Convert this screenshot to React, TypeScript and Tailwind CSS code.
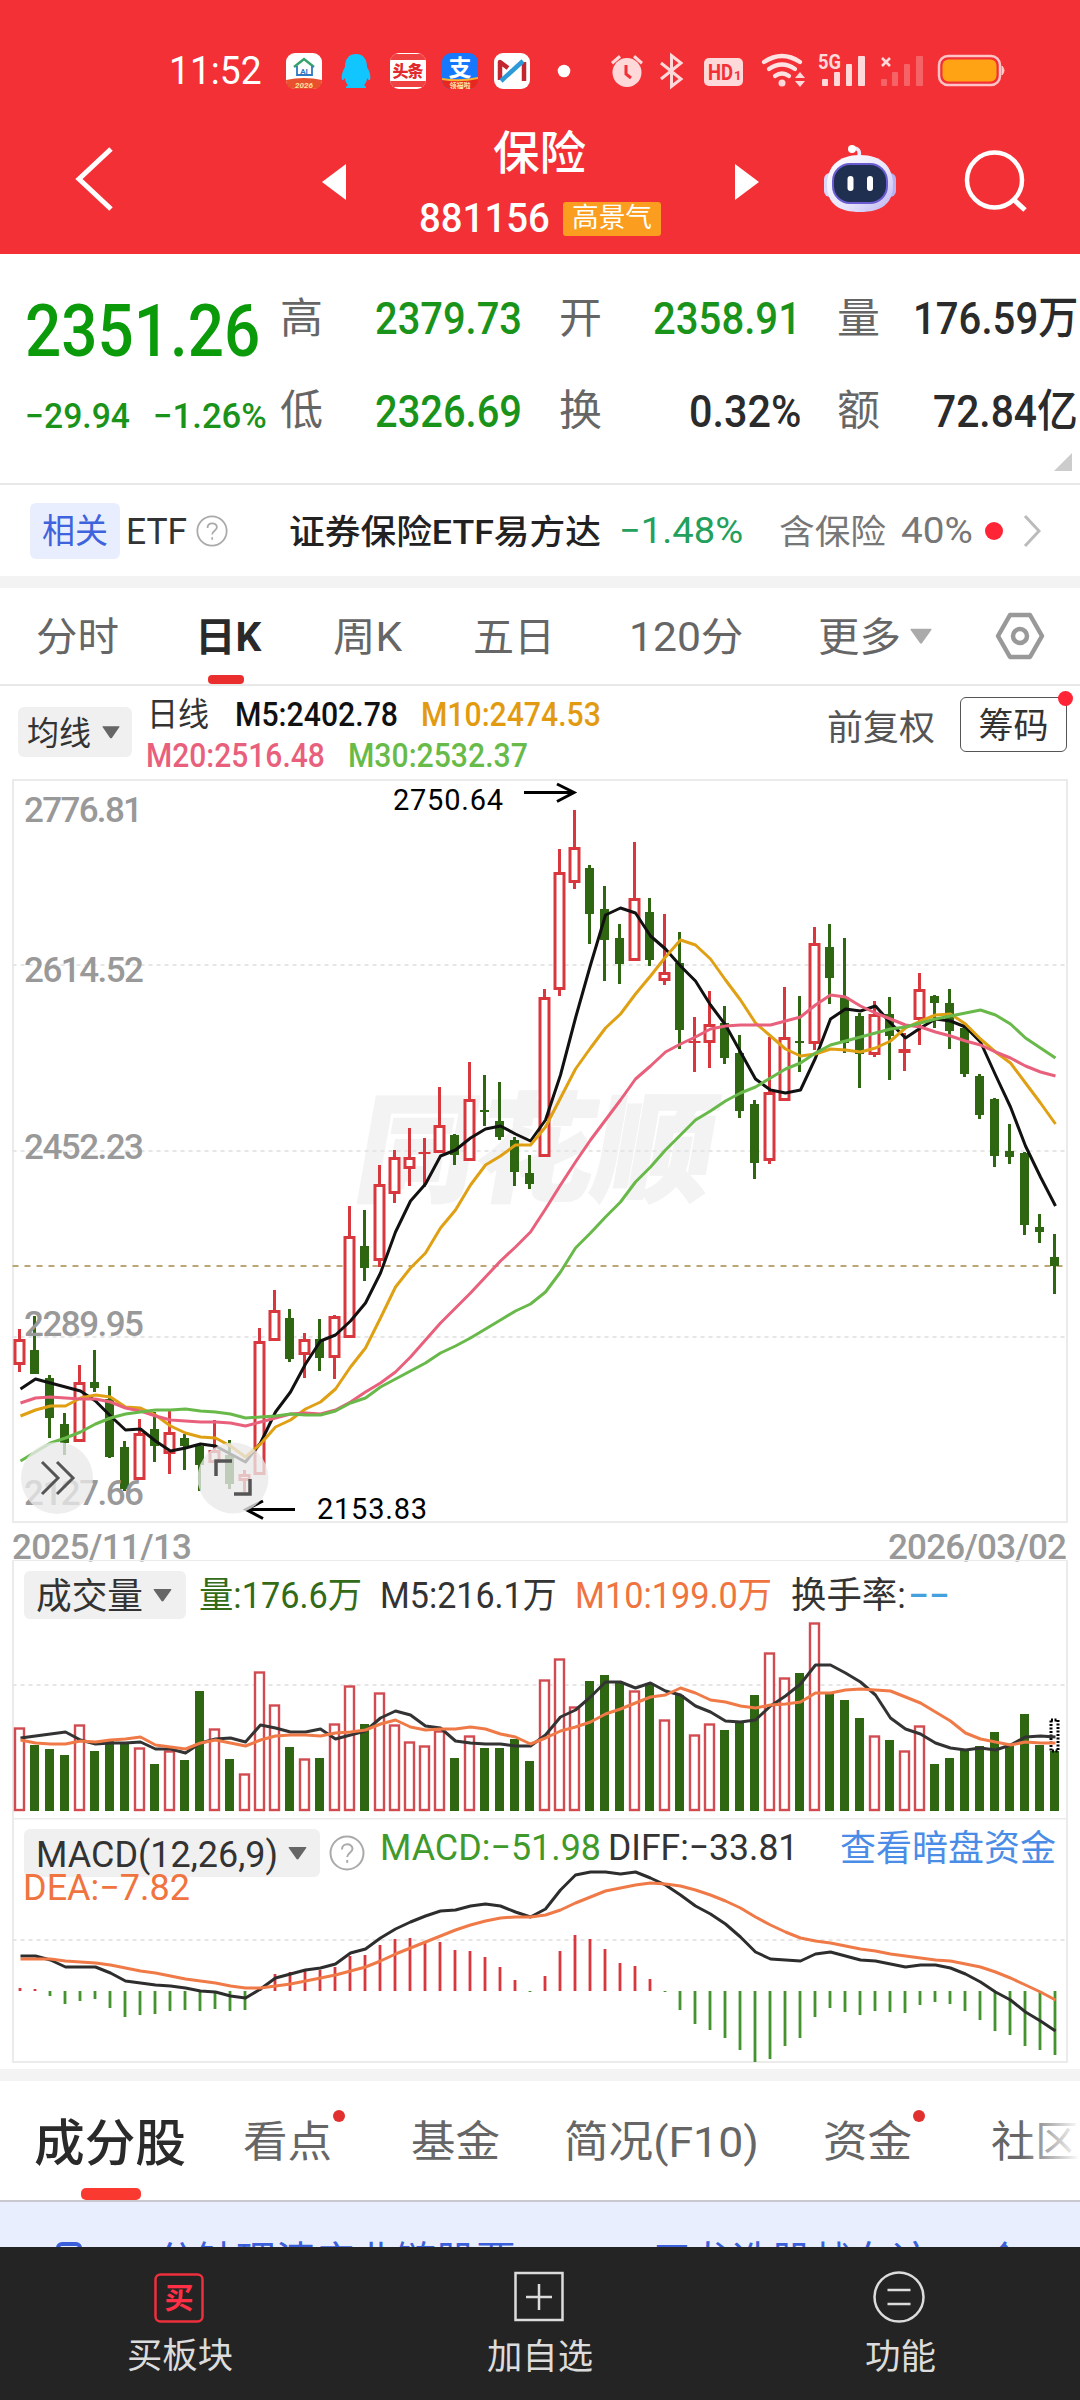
import { useLayoutEffect, useRef, useState, type ReactNode } from 'react';
import { clsx } from 'clsx';

const RED = '#d8383d';
const GREEN = '#2f6612';

// up/down flag, high, body top, body bottom, low, volume top
type Candle = [0 | 1, number, number, number, number, number];

const candles: Candle[] = [
  [1, 1329, 1339, 1365, 1372, 1729], [0, 1316, 1350, 1374, 1374, 1745], [0, 1375, 1378, 1418, 1438, 1749], [0, 1413, 1424, 1443, 1455, 1755],
  [1, 1365, 1382, 1442, 1442, 1726], [0, 1350, 1382, 1388, 1392, 1751], [0, 1386, 1399, 1457, 1458, 1741], [0, 1441, 1447, 1489, 1491, 1743],
  [1, 1419, 1433, 1480, 1480, 1749], [0, 1412, 1429, 1446, 1462, 1764], [1, 1411, 1432, 1454, 1474, 1752], [0, 1434, 1438, 1446, 1470, 1760],
  [0, 1443, 1446, 1465, 1491, 1691], [1, 1420, 1450, 1463, 1463, 1730], [0, 1440, 1455, 1484, 1489, 1759], [1, 1470, 1474, 1481, 1492, 1775],
  [1, 1328, 1341, 1475, 1475, 1673], [1, 1290, 1310, 1341, 1341, 1706], [0, 1309, 1318, 1359, 1362, 1747], [1, 1333, 1339, 1355, 1378, 1760],
  [0, 1319, 1339, 1358, 1371, 1758], [1, 1315, 1316, 1358, 1379, 1725], [1, 1206, 1236, 1338, 1338, 1687], [0, 1210, 1246, 1268, 1281, 1724],
  [1, 1165, 1184, 1261, 1267, 1694], [1, 1150, 1157, 1194, 1203, 1726], [1, 1128, 1157, 1169, 1186, 1743], [1, 1138, 1152, 1154, 1187, 1747],
  [1, 1087, 1125, 1153, 1153, 1732], [0, 1134, 1135, 1155, 1165, 1758], [1, 1062, 1099, 1161, 1161, 1737], [0, 1075, 1110, 1112, 1126, 1748],
  [0, 1082, 1121, 1137, 1140, 1748], [0, 1137, 1140, 1172, 1186, 1739], [0, 1155, 1173, 1184, 1189, 1761], [1, 989, 997, 1157, 1157, 1681],
  [1, 849, 872, 990, 996, 1660], [1, 810, 847, 883, 889, 1708], [0, 865, 868, 914, 944, 1681], [0, 886, 909, 940, 981, 1675],
  [0, 924, 938, 964, 984, 1682], [1, 842, 898, 961, 961, 1692], [0, 898, 912, 960, 966, 1684], [1, 914, 972, 981, 985, 1721],
  [0, 932, 963, 1030, 1049, 1695], [1, 1017, 1041, 1042, 1072, 1736], [1, 991, 1024, 1043, 1068, 1725], [0, 1006, 1023, 1058, 1064, 1730],
  [0, 1035, 1053, 1111, 1118, 1722], [0, 1100, 1104, 1163, 1179, 1695], [1, 1037, 1092, 1161, 1164, 1654], [1, 987, 1037, 1101, 1101, 1679],
  [0, 996, 1041, 1042, 1072, 1673], [1, 927, 943, 1044, 1050, 1624], [0, 924, 947, 978, 1004, 1693], [0, 938, 997, 1043, 1053, 1700],
  [0, 1013, 1016, 1054, 1088, 1718], [1, 1001, 1014, 1055, 1057, 1737], [0, 997, 1014, 1036, 1080, 1740], [1, 1033, 1049, 1053, 1071, 1752],
  [1, 973, 989, 1020, 1045, 1727], [0, 995, 996, 1003, 1028, 1764], [0, 989, 1003, 1031, 1049, 1758], [0, 1024, 1028, 1074, 1077, 1750],
  [0, 1074, 1076, 1115, 1119, 1746], [0, 1098, 1099, 1156, 1167, 1732], [0, 1124, 1151, 1157, 1164, 1746], [0, 1152, 1153, 1225, 1235, 1714],
  [0, 1214, 1227, 1232, 1243, 1745], [0, 1234, 1257, 1266, 1294, 1751],
];

const m5 = [1389, 1379, 1383, 1387, 1391, 1401, 1416, 1430, 1429, 1441, 1451, 1448, 1444, 1446, 1454, 1462, 1443, 1412, 1392, 1364, 1341, 1335, 1321, 1303, 1273, 1232, 1201, 1184, 1156, 1150, 1138, 1129, 1126, 1134, 1141, 1120, 1075, 1018, 965, 915, 908, 913, 936, 949, 966, 981, 1005, 1025, 1052, 1079, 1090, 1093, 1090, 1058, 1019, 1009, 1011, 1006, 1023, 1038, 1028, 1019, 1021, 1027, 1042, 1075, 1107, 1146, 1177, 1206];
const m10 = [1416, 1410, 1406, 1406, 1398, 1395, 1397, 1407, 1408, 1415, 1426, 1433, 1437, 1438, 1446, 1457, 1444, 1427, 1420, 1409, 1402, 1389, 1367, 1348, 1318, 1287, 1268, 1253, 1228, 1210, 1185, 1165, 1156, 1145, 1145, 1127, 1098, 1069, 1048, 1028, 1014, 994, 976, 957, 940, 945, 959, 980, 1000, 1023, 1036, 1049, 1056, 1054, 1049, 1050, 1052, 1048, 1041, 1028, 1021, 1015, 1014, 1024, 1039, 1052, 1063, 1083, 1103, 1124];
const m20 = [1403, 1398, 1397, 1398, 1399, 1399, 1402, 1408, 1411, 1416, 1420, 1421, 1422, 1422, 1423, 1426, 1422, 1418, 1414, 1413, 1414, 1410, 1402, 1392, 1383, 1372, 1357, 1340, 1323, 1308, 1293, 1277, 1261, 1247, 1232, 1209, 1185, 1162, 1140, 1120, 1100, 1079, 1066, 1052, 1044, 1037, 1029, 1026, 1025, 1025, 1025, 1021, 1017, 1005, 995, 997, 1006, 1013, 1019, 1025, 1027, 1032, 1036, 1041, 1045, 1052, 1058, 1066, 1072, 1076];
const m30 = [1461, 1452, 1443, 1438, 1432, 1424, 1418, 1414, 1412, 1410, 1410, 1409, 1411, 1412, 1414, 1418, 1417, 1416, 1414, 1415, 1415, 1411, 1403, 1398, 1387, 1379, 1371, 1363, 1353, 1346, 1338, 1329, 1320, 1311, 1304, 1292, 1272, 1248, 1233, 1217, 1202, 1182, 1167, 1150, 1135, 1120, 1111, 1101, 1093, 1087, 1078, 1069, 1063, 1053, 1045, 1041, 1037, 1033, 1029, 1027, 1023, 1019, 1016, 1013, 1010, 1015, 1024, 1038, 1048, 1058];
const vol5 = [1738, 1736, 1734, 1732, 1740, 1744, 1743, 1743, 1742, 1749, 1749, 1753, 1743, 1739, 1738, 1742, 1725, 1728, 1732, 1732, 1729, 1739, 1735, 1731, 1718, 1711, 1715, 1726, 1728, 1741, 1743, 1744, 1744, 1746, 1746, 1735, 1717, 1710, 1697, 1682, 1682, 1688, 1683, 1691, 1695, 1706, 1712, 1721, 1722, 1720, 1706, 1696, 1684, 1665, 1665, 1673, 1682, 1695, 1718, 1729, 1734, 1743, 1748, 1750, 1748, 1750, 1745, 1737, 1736, 1737];
const vol10 = [1740, 1743, 1744, 1744, 1741, 1742, 1740, 1739, 1737, 1745, 1747, 1749, 1743, 1740, 1743, 1746, 1740, 1736, 1735, 1735, 1736, 1733, 1732, 1730, 1724, 1720, 1727, 1730, 1729, 1729, 1727, 1729, 1734, 1737, 1744, 1738, 1731, 1727, 1722, 1714, 1709, 1703, 1697, 1695, 1688, 1693, 1700, 1702, 1706, 1708, 1705, 1704, 1702, 1693, 1693, 1690, 1689, 1690, 1691, 1697, 1703, 1712, 1721, 1733, 1739, 1742, 1745, 1742, 1743, 1743];
const macd = [1988, 1989, 1996, 2004, 2001, 1999, 2008, 2017, 2015, 2014, 2011, 2010, 2011, 2009, 2011, 2010, 1990, 1974, 1972, 1969, 1970, 1967, 1956, 1955, 1945, 1939, 1938, 1942, 1942, 1950, 1951, 1957, 1967, 1980, 1992, 1976, 1951, 1935, 1939, 1949, 1963, 1966, 1979, 1992, 2010, 2024, 2030, 2038, 2050, 2062, 2059, 2046, 2038, 2017, 2008, 2012, 2015, 2011, 2012, 2013, 2005, 2002, 2004, 2011, 2020, 2031, 2035, 2046, 2050, 2055];
const diff = [1956, 1956, 1960, 1967, 1967, 1967, 1973, 1981, 1983, 1985, 1986, 1988, 1991, 1992, 1996, 1998, 1989, 1978, 1974, 1970, 1968, 1964, 1953, 1949, 1938, 1929, 1922, 1916, 1911, 1910, 1906, 1904, 1906, 1912, 1917, 1909, 1890, 1875, 1872, 1872, 1874, 1872, 1878, 1885, 1895, 1906, 1914, 1924, 1937, 1952, 1959, 1960, 1961, 1954, 1952, 1956, 1960, 1961, 1964, 1967, 1965, 1965, 1968, 1974, 1982, 1992, 2000, 2012, 2021, 2031];
const dea = [1959, 1959, 1959, 1961, 1962, 1963, 1965, 1968, 1971, 1973, 1976, 1979, 1981, 1983, 1986, 1988, 1988, 1986, 1984, 1981, 1978, 1975, 1971, 1967, 1961, 1954, 1948, 1942, 1936, 1930, 1925, 1921, 1918, 1917, 1917, 1915, 1910, 1903, 1897, 1891, 1888, 1885, 1883, 1884, 1886, 1890, 1895, 1901, 1908, 1917, 1925, 1932, 1938, 1941, 1943, 1946, 1949, 1951, 1954, 1956, 1958, 1960, 1961, 1964, 1967, 1972, 1978, 1985, 1992, 2000];

const cx = (i: number) => 19.5 + i * 15;

function Curve({ data, color }: { data: number[]; color: string }) {
  return (
    <polyline
      points={data.map((y, i) => `${cx(i) + 1},${y}`).join(' ')}
      fill="none"
      stroke={color}
      strokeWidth="3"
      strokeLinejoin="round"
    />
  );
}

// Squeezes or stretches one line of text to the width of its box
function Fit({ className, children }: { className: string; children: ReactNode }) {
  const outer = useRef<HTMLDivElement>(null);
  const inner = useRef<HTMLSpanElement>(null);
  const [scale, setScale] = useState(1);

  useLayoutEffect(() => {
    if (outer.current && inner.current) {
      setScale(outer.current.clientWidth / inner.current.offsetWidth);
    }
  }, []);

  return (
    <div ref={outer} className={clsx('shrink-0 whitespace-nowrap leading-none', className)}>
      <span ref={inner} className="inline-block origin-left" style={{ transform: `scaleX(${scale})` }}>
        {children}
      </span>
    </div>
  );
}

function Caret({ className }: { className?: string }) {
  return (
    <svg viewBox="0 0 20 14" className={clsx('shrink-0', className)} fill="currentColor">
      <path d="M1 0h18q1 0 .4 1L11 13q-1 1-2 0L.6 1Q0 0 1 0z" />
    </svg>
  );
}

function Help({ className }: { className?: string }) {
  return (
    <svg viewBox="0 0 36 36" className={clsx('shrink-0', className)} fill="none" stroke="#aaa" strokeWidth="2">
      <circle cx="18" cy="18" r="16.5" />
      <path d="M13 14.5c0-7 10.500-6.500 10.500-.8 0 4-5.300 4-5.300 8.300" />
      <path d="M18.200 25v2.800" />
    </svg>
  );
}

function StatusBar() {
  return (
    <div className="flex h-[142px] items-center pl-[169px]">
      <Fit className="w-[93px] text-[38px] text-white">11:52</Fit>
      <svg viewBox="280 50 740 42" className="ml-[18px] h-[42px] w-[740px]">
        <rect x="286" y="53" width="36" height="36" rx="9" fill="#fff" />
        <path d="M286 80q18-4 36 0q0 9-9 9h-18q-9 0-9-9z" fill="#e8502e" />
        <text x="304" y="87.500" textAnchor="middle" fontSize="8" fontStyle="italic" fontWeight="700" fill="#ffe3a0">2026</text>
        <path d="M294 67l10-8 10 8" fill="none" stroke="#35a36b" strokeWidth="2.500" />
        <path d="M297 66v9h15v-9" fill="none" stroke="#2f78c4" strokeWidth="1.800" />
        <text x="304" y="74" textAnchor="middle" fontSize="8" fontWeight="700" fill="#2f78c4">AI</text>
        <path d="M356 54c-8 0-11 6-11 13-3 5-4 9-3 13 1 1 2-1 3-2 0 3 1 5 3 7-2 1-3 3-1 3h18c2 0 1-2-1-3 2-2 3-4 3-7 1 1 2 3 3 2 1-4 0-8-3-13 0-7-3-13-11-13z" fill="#11c5ff" />
        <clipPath id="toutiao"><rect x="390" y="53" width="36" height="36" rx="9" /></clipPath>
        <g clipPath="url(#toutiao)">
          <rect x="390" y="53" width="36" height="36" fill="#fff" />
          <rect x="390" y="54" width="36" height="6" fill="#f04142" />
          <rect x="390" y="81" width="36" height="6" fill="#f04142" />
          <text x="408" y="77" textAnchor="middle" fontSize="16" fontWeight="900" textLength="31" fill="#e12a2d">头条</text>
        </g>
        <clipPath id="alipay"><rect x="442" y="53" width="36" height="36" rx="9" /></clipPath>
        <g clipPath="url(#alipay)">
          <rect x="442" y="53" width="36" height="36" fill="#1677ff" />
          <text x="460" y="76" textAnchor="middle" fontSize="23" fontWeight="700" fill="#fff">支</text>
          <path d="M442 79q18 2 36-1v12h-36z" fill="#e8281e" />
          <path d="M442 79q18 3 36-1" stroke="#f9b233" strokeWidth="2" fill="none" />
          <text x="460" y="88" textAnchor="middle" fontSize="7" fontWeight="700" fill="#ffe9b0">领福啦</text>
        </g>
        <rect x="494" y="53" width="36" height="36" rx="9" fill="#fff" />
        <path d="M500 80V62l8 6" fill="none" stroke="#c3262e" strokeWidth="4.500" strokeLinejoin="round" />
        <path d="M524 62v19" stroke="#c3262e" strokeWidth="4.500" />
        <path d="M501 81l22-20" stroke="#2c9ad8" strokeWidth="4.500" />
        <circle cx="564" cy="71" r="6.300" fill="#fff" />

        <g fill="#ffd9da">
          <circle cx="627" cy="72.500" r="14.500" />
          <path d="M611 62l8-7 2 2.500-8 7zM643 62l-8-7-2 2.500 8 7z" />
          <path d="M626 65v9l5 4" stroke="#f23036" strokeWidth="3" fill="none" />
          <path d="M661 63l20 16-9.500 7.500v-31L681 63l-20 16" fill="none" stroke="#ffd9da" strokeWidth="3" />
          <rect x="704" y="58" width="39" height="28" rx="5" />
          <text x="708" y="80" fontSize="22" fontWeight="700" textLength="25" lengthAdjust="spacingAndGlyphs" fill="#f23036">HD</text>
          <text x="734" y="80" fontSize="13" fontWeight="700" fill="#f23036">1</text>
          <g fill="none" stroke="#ffe3e3" strokeWidth="4.200" strokeLinecap="round">
            <path d="M764 62q18-12 36 0" />
            <path d="M769 69q13-9 26 0" />
            <path d="M775 76q7-5 14 0" />
          </g>
          <circle cx="782" cy="83" r="3.500" />
          <path d="M795 78l5-6 5 6zM795 81l5 6 5-6z" />
          <text x="818" y="69" fontSize="20" fontWeight="700" textLength="23" lengthAdjust="spacingAndGlyphs">5G</text>
          <rect x="822" y="79" width="6" height="7" rx="1" />
          <rect x="834" y="72" width="6" height="14" rx="1" />
          <rect x="846" y="64" width="6" height="22" rx="1" />
          <rect x="858" y="56" width="7" height="30" rx="1" />
          <path d="M882 58l8 8M890 58l-8 8" stroke="#ffd9da" strokeWidth="2.500" />
          <g opacity=".3">
            <rect x="881" y="79" width="6" height="7" rx="1" />
            <rect x="892" y="72" width="6" height="14" rx="1" />
            <rect x="904" y="64" width="6" height="22" rx="1" />
            <rect x="916" y="56" width="7" height="30" rx="1" />
          </g>
          <rect x="939" y="56" width="61" height="29" rx="9" fill="none" stroke="#ffc4c6" strokeWidth="2.500" />
          <rect x="942.500" y="59.500" width="54" height="22" rx="6" fill="#ffa314" />
          <path d="M1002 66q4 4.500 0 9z" stroke="#ffc4c6" />
        </g>
      </svg>
    </div>
  );
}

function Header() {
  return (
    <header className="h-[254px] bg-[#f23036]">
      <StatusBar />
      <div className="-mt-4 flex h-[128px]">
        <svg viewBox="0 0 40 66" className="mt-5 ml-[75px] h-[66px] w-[40px]" fill="none" stroke="#fff" strokeWidth="5">
          <path d="M36 3L4 33l32 30" />
        </svg>
        <svg viewBox="0 0 24 36" className="mt-[38px] ml-[207px] h-9 w-6" fill="#fff"><path d="M24 0v36L0 18z" /></svg>
        <div className="flex w-[387px] flex-col items-center">
          <Fit className="mt-[4px] w-[93px] text-[46px] font-medium text-white">保险</Fit>
          <div className="mt-[22px] flex items-center">
            <Fit className="w-[131px] text-[41px] font-medium text-white">881156</Fit>
            <div className="ml-[13px] flex h-[34px] w-[98px] items-center justify-center rounded-[3px] bg-[#fb9d1e]">
              <Fit className="w-[80px] text-[27px] text-white">高景气</Fit>
            </div>
          </div>
        </div>
        <svg viewBox="0 0 24 36" className="mt-[38px] ml-[2px] h-9 w-6" fill="#fff"><path d="M0 0v36l24-18z" /></svg>
        <svg viewBox="0 0 76 72" className="mt-[17px] ml-[63px] h-[72px] w-[76px]">
          <defs>
            <linearGradient id="shell" x1="0" y1="0" x2="1" y2="1">
              <stop offset="0" stopColor="#fff" />
              <stop offset=".6" stopColor="#e6e4fb" />
              <stop offset="1" stopColor="#b9b2f2" />
            </linearGradient>
          </defs>
          <path d="M37 14q2-9-6-9" fill="none" stroke="#eceaff" strokeWidth="3.500" />
          <circle cx="30" cy="6" r="4" fill="#fff" />
          <rect x="2" y="30" width="12" height="24" rx="6" fill="#d9d6fa" />
          <rect x="62" y="30" width="12" height="24" rx="6" fill="#b9b2f2" />
          <path d="M38 12c22 0 33 12 33 30 0 19-12 27-33 27S5 61 5 42c0-18 11-30 33-30z" fill="url(#shell)" />
          <rect x="11" y="21" width="54" height="39" rx="17" fill="#1f2f50" stroke="#6a5bd0" strokeWidth="2" />
          <rect x="25.500" y="33" width="6" height="15" rx="3" fill="#fff" />
          <rect x="45" y="33" width="6" height="15" rx="3" fill="#fff" />
        </svg>
        <svg viewBox="0 0 64 64" className="mt-[23px] ml-[66px] h-[64px] w-[64px]" fill="none" stroke="#fff" strokeWidth="4.500">
          <circle cx="30.500" cy="31" r="27.500" />
          <path d="M49 50l12 11" strokeWidth="5" />
        </svg>
      </div>
    </header>
  );
}

function Quote() {
  return (
    <section className="h-[231px] border-b-2 border-[#e8e8e8] bg-white text-[45px] text-[#2b2b2b]">
      <div className="flex h-[129px] items-center">
        <Fit className="mt-[26px] ml-[25px] w-[235px] text-[73px] font-medium text-[#0a9a0a]">2351.26</Fit>
        <Fit className="ml-[20px] w-[43px] text-[42px] text-[#666]">高</Fit>
        <Fit className="ml-[52px] w-[147px] font-medium text-[#1a931a]">2379.73</Fit>
        <Fit className="ml-[37px] w-[43px] text-[42px] text-[#666]">开</Fit>
        <Fit className="ml-[51px] w-[148px] font-medium text-[#1a931a]">2358.91</Fit>
        <Fit className="ml-[36px] w-[43px] text-[42px] text-[#666]">量</Fit>
        <Fit className="ml-[33px] w-[165px] font-medium">176.59万</Fit>
      </div>
      <div className="mt-[5px] flex h-[46px] items-center">
        <Fit className="mt-[10px] ml-[25px] w-[105px] text-[35px] font-medium text-[#1a931a]">−29.94</Fit>
        <Fit className="mt-[10px] ml-[23px] w-[114px] text-[35px] font-medium text-[#1a931a]">−1.26%</Fit>
        <Fit className="ml-[13px] w-[43px] text-[42px] text-[#666]">低</Fit>
        <Fit className="ml-[52px] w-[147px] font-medium text-[#1a931a]">2326.69</Fit>
        <Fit className="ml-[37px] w-[43px] text-[42px] text-[#666]">换</Fit>
        <Fit className="ml-[87px] w-[112px] font-medium">0.32%</Fit>
        <Fit className="ml-[36px] w-[43px] text-[42px] text-[#666]">额</Fit>
        <Fit className="ml-[53px] w-[145px] font-medium">72.84亿</Fit>
      </div>
      <svg viewBox="0 0 18 18" className="mt-[19px] ml-[1054px] h-[18px] w-[18px]" fill="#ccc"><path d="M18 0v18H0z" /></svg>
    </section>
  );
}

function RelatedEtf() {
  return (
    <section className="flex h-[91px] items-center bg-white text-[34px]">
      <div className="ml-[30px] flex h-14 w-[90px] items-center justify-center rounded-[6px] bg-[#e8eefd]">
        <Fit className="mt-px w-[66px] text-[#3f63dc]">相关</Fit>
      </div>
      <Fit className="mt-[2px] ml-[6px] w-[61px] text-[36px] text-[#333]">ETF</Fit>
      <Help className="ml-[9px] h-8 w-8" />
      <Fit className="mt-[2px] ml-[61px] w-[312px] font-medium text-[#222]">证券保险ETF易方达</Fit>
      <Fit className="ml-[18px] w-[124px] text-[36px] text-[#22a05c]">−1.48%</Fit>
      <Fit className="mt-[2px] ml-[36px] w-[107px] text-[#777]">含保险</Fit>
      <Fit className="ml-[15px] w-[72px] text-[36px] text-[#777]">40%</Fit>
      <div className="ml-[12px] h-[18px] w-[18px] shrink-0 rounded-full bg-[#ff2436]" />
      <svg viewBox="0 0 18 34" className="ml-[20px] h-[34px] w-[18px]" fill="none" stroke="#bbb" strokeWidth="3">
        <path d="M2 2l14 15L2 32" />
      </svg>
    </section>
  );
}

function PeriodTabs() {
  return (
    <nav className="relative flex h-[98px] items-center border-b-2 border-[#e8e8e8] bg-white text-[40px] text-[#666]">
      <Fit className="mt-[3px] ml-[36px] w-[83px]">分时</Fit>
      <Fit className="mt-[3px] ml-[76px] w-[66px] font-bold text-[#2a2a2a]">日K</Fit>
      <Fit className="mt-[3px] ml-[72px] w-[69px]">周K</Fit>
      <Fit className="mt-[3px] ml-[71px] w-[82px]">五日</Fit>
      <Fit className="mt-[3px] ml-[74px] w-[114px]">120分</Fit>
      <Fit className="mt-[3px] ml-[75px] w-[83px]">更多</Fit>
      <Caret className="ml-[9px] h-[17px] w-[22px] text-[#aaa]" />
      <svg viewBox="0 0 50 48" className="ml-[63px] h-[48px] w-[50px]" fill="none" stroke="#999" strokeWidth="4.500" strokeLinejoin="round">
        <path d="M15 3h20l12 21-12 21H15L3 24z" />
        <circle cx="25" cy="24" r="7" />
      </svg>
      <div className="absolute bottom-0 left-[208px] h-[9px] w-9 rounded-[4px] bg-[#ea2e2e]" />
    </nav>
  );
}

function Averages() {
  return (
    <div className="flex h-[94px] bg-white text-[33px]">
      <div className="mt-[21px] ml-[18px] flex h-[50px] w-[114px] items-center rounded-[6px] bg-[#f0f0f0]">
        <Fit className="mt-[2px] ml-[9px] w-[64px] text-[#333]">均线</Fit>
        <Caret className="ml-[11px] h-[13px] w-[18px] text-[#666]" />
      </div>
      <div className="ml-[15px] w-[682px] pt-[7px] font-medium">
        <div className="flex h-[42px] items-center">
          <Fit className="w-[62px] font-normal text-[#333]">日线</Fit>
          <Fit className="ml-[26px] w-[163px] text-[#111]">M5:2402.78</Fit>
          <Fit className="ml-[23px] w-[180px] text-[#e29b10]">M10:2474.53</Fit>
        </div>
        <div className="flex h-[40px] items-center">
          <Fit className="-ml-px w-[179px] text-[#e8607c]">M20:2516.48</Fit>
          <Fit className="ml-[23px] w-[180px] text-[#68bb49]">M30:2532.37</Fit>
        </div>
      </div>
      <Fit className="mt-[25px] -ml-[2px] w-[108px] text-[35px] text-[#555]">前复权</Fit>
      <div className="relative mt-[11px] ml-[25px] flex h-[55px] w-[107px] items-center justify-center rounded-[6px] border border-[#555]">
        <Fit className="mt-[3px] w-[70px] text-[35px] text-[#333]">筹码</Fit>
        <div className="absolute -top-[7px] -right-[7px] h-[15px] w-[15px] rounded-full bg-[#ff2436]" />
      </div>
    </div>
  );
}

function Dashed({ y, color = '#e6e6e6', dash = '4 4' }: { y: number; color?: string; dash?: string }) {
  return <path d={`M12.500 ${y}H1066`} stroke={color} strokeWidth="2" strokeDasharray={dash} />;
}

const priceLabels: [string, number, number][] = [
  ['2776.81', 822, 119],
  ['2614.52', 982, 120],
  ['2452.23', 1159, 120],
  ['2289.95', 1336, 120],
  ['2127.66', 1505, 120],
];

function PriceChart() {
  return (
    <svg viewBox="0 778 1080 782" className="relative block h-[782px] w-full overflow-visible">
      <rect x="13" y="780" width="1054" height="742" fill="#fff" stroke="#ebebeb" strokeWidth="2" />
      <text
        x="354"
        y="1192"
        fontSize="118"
        fontWeight="900"
        fill="#f3f3f3"
        stroke="#f3f3f3"
        strokeWidth="2"
        textLength="356"
        lengthAdjust="spacingAndGlyphs"
        transform="translate(208 0) skewX(-10)"
      >
        同花顺
      </text>
      <Dashed y={965} />
      <Dashed y={1151} />
      <Dashed y={1337} />
      <Dashed y={1266} color="#bda676" dash="6 6" />

      {candles.map(([up, high, top, bottom, low], i) => {
        const x = cx(i);
        const color = up ? RED : GREEN;
        const flat = bottom - top < 5;
        return (
          <g key={i} stroke={color} strokeWidth="3">
            <path d={`M${x} ${high}V${top}M${x} ${bottom}V${low}`} />
            {up && !flat ? (
              <rect x={x - 4.5} y={top + 1.5} width="9" height={Math.max(bottom - top - 3, 1)} fill="#fff" />
            ) : (
              <rect x={x - (up ? 6 : 4.5)} y={top} width={up ? 12 : 9} height={Math.max(bottom - top, 2)} fill={color} stroke="none" />
            )}
          </g>
        );
      })}

      <Curve data={m5} color="#111" />
      <Curve data={m10} color="#e0a014" />
      <Curve data={m20} color="#e8607c" />
      <Curve data={m30} color="#68b94a" />

      <g fontSize="35" fontWeight="500" fill="#999">
        {priceLabels.map(([label, y, w]) => (
          <text key={label} x="24" y={y} textLength={w}>{label}</text>
        ))}
        <text x="12" y="1559" textLength="180">2025/11/13</text>
        <text x="888" y="1559" textLength="179">2026/03/02</text>
      </g>

      <g fontSize="29" fill="#000">
        <text x="393" y="810" textLength="110">2750.64</text>
        <text x="317" y="1519" textLength="110">2153.83</text>
      </g>
      <g fill="none" stroke="#000" strokeWidth="3">
        <path d="M524 792.500H574M557 784l17 8.500-17 9" />
        <path d="M295 1509.500H246M263 1501l-17 8.500 17 9" />
      </g>

      <circle cx="57" cy="1478" r="36" fill="#e9e9e9" fillOpacity=".78" />
      <path d="M42 1462l16 16-16 16M57 1462l16 16-16 16" fill="none" stroke="#555" strokeWidth="3" />
      <circle cx="233" cy="1478" r="35.500" fill="#e9e9e9" fillOpacity=".78" />
      <path d="M216 1476v-15h16M250 1479v15h-16" fill="none" stroke="#555" strokeWidth="3.500" />
    </svg>
  );
}

function VolumeChart() {
  return (
    <div className="relative">
      <svg viewBox="0 1560 1080 258" className="block h-[258px] w-full">
        <path d="M13 1818V1560H1067V1818" fill="none" stroke="#ebebeb" strokeWidth="2" />
        <Dashed y={1685} />
        {candles.map(([up, , , , , top], i) =>
          up ? (
            <rect key={i} x={cx(i) - 4.5} y={top - 0.5} width="9" height={1810.5 - top} fill="#fff" stroke="#d14b51" strokeWidth="2.400" />
          ) : (
            <rect key={i} x={cx(i) - 4.5} y={top} width="9" height={1811 - top} fill={GREEN} />
          ),
        )}
        <rect x="1051" y="1720" width="7" height="31" fill="#fff" stroke="#000" strokeWidth="3" strokeDasharray="2 1.500" />
        <Curve data={vol5} color="#333" />
        <Curve data={vol10} color="#f07a47" />
      </svg>
      <div className="absolute top-[11px] left-6 flex h-12 items-center text-[36px]">
        <div className="flex h-12 w-[162px] shrink-0 items-center rounded-[6px] bg-[#f0f0f0]">
          <Fit className="mt-[3px] ml-3 w-[107px] text-[#333]">成交量</Fit>
          <Caret className="ml-[10px] h-[13px] w-[19px] text-[#666]" />
        </div>
        <Fit className="mt-[2px] ml-[13px] w-[163px] text-[#336b18]">量:176.6万</Fit>
        <Fit className="mt-[2px] ml-[18px] w-[177px] text-[#333]">M5:216.1万</Fit>
        <Fit className="mt-[2px] ml-[18px] w-[197px] text-[#ef7440]">M10:199.0万</Fit>
        <Fit className="mt-[2px] ml-[19px] w-[115px] text-[#333]">换手率:</Fit>
        <Fit className="mt-[2px] ml-[2px] w-[42px] font-medium text-[#45a0de]">−−</Fit>
      </div>
    </div>
  );
}

function MacdChart() {
  return (
    <div className="relative">
      <svg viewBox="0 1818 1080 251" className="block h-[251px] w-full">
        <rect x="13" y="1818.500" width="1054" height="243.500" fill="none" stroke="#ebebeb" strokeWidth="2" />
        <Dashed y={1940} />
        {macd.map((y, i) => (
          <path key={i} d={`M${cx(i) + 0.5} 1991V${y}`} stroke={y < 1991 ? RED : '#45932f'} strokeWidth="2.800" />
        ))}
      </svg>
      <div className="absolute top-[11px] left-6 flex h-12 items-center text-[37px]">
        <div className="flex h-12 w-[296px] shrink-0 items-center rounded-[6px] bg-[#f0f0f0]">
          <Fit className="mt-[3px] ml-3 w-[242px] text-[#333]">MACD(12,26,9)</Fit>
          <Caret className="ml-[10px] h-[13px] w-[19px] text-[#666]" />
        </div>
        <Help className="ml-[9px] h-9 w-9" />
        <Fit className="-mt-[11px] ml-[15px] w-[221px] text-[#3f9a2b]">MACD:−51.98</Fit>
        <Fit className="-mt-[11px] ml-[7px] w-[190px] text-[#333]">DIFF:−33.81</Fit>
        <Fit className="-mt-[9px] ml-[42px] w-[216px] text-[36px] text-[#4b8de6]">查看暗盘资金</Fit>
      </div>
      <Fit className="absolute top-[52px] left-[23px] w-[167px] text-[36px] text-[#ef7440]">DEA:−7.82</Fit>
      <svg viewBox="0 1818 1080 251" className="absolute inset-0 h-[251px] w-full">
        <Curve data={diff} color="#2d2d2d" />
        <Curve data={dea} color="#f07a47" />
      </svg>
    </div>
  );
}

function DetailTabs() {
  return (
    <nav className="relative flex h-[121px] items-center overflow-hidden border-b-2 border-[#c8c8ce] bg-white pt-[4px] text-[43px] text-[#666]">
      <Fit className="mt-[2px] ml-[34px] w-[152px] text-[50px] font-medium text-[#2a2a2a]">成分股</Fit>
      <Fit className="ml-[57px] w-[89px]">看点</Fit>
      <Fit className="ml-[79px] w-[89px]">基金</Fit>
      <Fit className="ml-[64px] w-[195px]">简况(F10)</Fit>
      <Fit className="ml-[64px] w-[89px]">资金</Fit>
      <Fit className="ml-[79px] w-[88px]">社区</Fit>
      <div className="absolute top-[29px] left-[333px] h-3 w-3 rounded-full bg-[#e0302f]" />
      <div className="absolute top-[29px] left-[913px] h-3 w-3 rounded-full bg-[#e0302f]" />
      <div className="absolute bottom-0 left-[81px] h-3 w-[60px] rounded-[5px] bg-[#fa3a30]" />
      <div className="absolute top-0 right-0 h-full w-[60px] bg-gradient-to-r from-white/0 to-white" />
    </nav>
  );
}

function Promo() {
  return (
    <div className="flex h-[45px] items-start overflow-hidden bg-[#e8eefd] pt-[40px] text-[40px] leading-none whitespace-nowrap text-[#3a5fd9]">
      <div className="ml-[56px] h-[34px] w-[26px] shrink-0 rounded-[6px] border-[4px] border-[#3a5fd9]" />
      <div className="ml-[34px]">一分钟理清产业链股票</div>
      <div className="ml-[136px]">五龙选股战在这</div>
      <div className="ml-[52px]">个</div>
    </div>
  );
}

function BottomBar() {
  return (
    <footer className="flex h-[153px] bg-[#242424] pt-[24px] text-[35px] text-[#dcdcdc]">
      <div className="flex w-1/3 flex-col items-center">
        <svg viewBox="0 0 52 52" className="-ml-[2px] h-[52px] w-[52px]">
          <rect x="2.500" y="3.500" width="47" height="47" rx="5" fill="none" stroke="#ee2f3d" strokeWidth="2.500" />
          <text x="26" y="37.500" textAnchor="middle" fontSize="29" fontWeight="700" fill="#ff2f45">买</text>
        </svg>
        <Fit className="mt-[16px] w-[106px]">买板块</Fit>
      </div>
      <div className="flex w-1/3 flex-col items-center">
        <svg viewBox="0 0 52 52" className="-ml-[2px] h-[52px] w-[52px]" fill="none" stroke="#dcdcdc" strokeWidth="2.500">
          <rect x="2.500" y="2" width="47" height="47" />
          <path d="M26 13v26M13 26h26" />
        </svg>
        <Fit className="mt-[17px] w-[106px]">加自选</Fit>
      </div>
      <div className="flex w-1/3 flex-col items-center">
        <svg viewBox="0 0 52 52" className="-ml-[2px] h-[52px] w-[52px]" fill="none" stroke="#dcdcdc" strokeWidth="2.500">
          <circle cx="26" cy="26" r="24.500" />
          <path d="M14.500 19h23M14.500 33h23" />
        </svg>
        <Fit className="mt-[17px] w-[71px]">功能</Fit>
      </div>
    </footer>
  );
}

export default function App() {
  return (
    <div className="h-[2400px] w-[1080px] overflow-hidden bg-white font-['Roboto','Noto_Sans_CJK_SC',sans-serif]">
      <Header />
      <Quote />
      <RelatedEtf />
      <div className="h-3 bg-[#f3f3f3]" />
      <PeriodTabs />
      <Averages />
      <div className="-mt-[2px]">
        <PriceChart />
      </div>
      <VolumeChart />
      <MacdChart />
      <div className="h-3 bg-[#f3f3f3]" />
      <DetailTabs />
      <Promo />
      <BottomBar />
    </div>
  );
}
